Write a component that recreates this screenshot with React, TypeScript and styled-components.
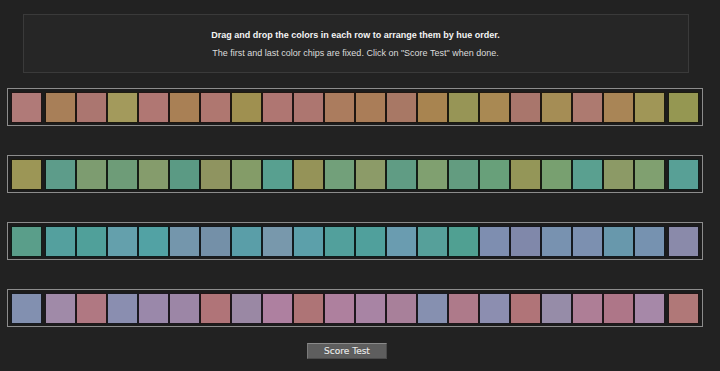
import React from "react";
import styled, { createGlobalStyle } from "styled-components";

const GlobalStyle = createGlobalStyle`
  html, body {
    margin: 0;
    padding: 0;
    background: #222222;
  }
  body {
    font-family: "Liberation Sans", Arial, sans-serif;
  }
`;

const Page = styled.div`
  width: 710px;
  display: flex;
  flex-direction: column;
  align-items: center;
  padding-top: 14px;
`;

const InfoBox = styled.div`
  box-sizing: border-box;
  width: 666px;
  height: 59px;
  margin-left: 1px;
  background: #262626;
  border: 1px solid #3a3a3a;
  display: flex;
  flex-direction: column;
  align-items: center;
  padding-top: 11px;
`;

const Line = styled.div<{ $bold?: boolean }>`
  font-size: 9px;
  line-height: 18px;
  font-weight: ${(p) => (p.$bold ? 700 : 400)};
  color: ${(p) => (p.$bold ? "#f4f4f4" : "#dcdcdc")};
  white-space: nowrap;
`;

const Rows = styled.div`
  display: flex;
  flex-direction: column;
  gap: 29px;
  margin-top: 15px;
`;

const Row = styled.div`
  box-sizing: border-box;
  width: 696px;
  height: 38px;
  border: 1px solid #8c8c8c;
  background: #1c1c1c;
  padding: 3px 3px 2px 3px;
  display: flex;
  gap: 3px;
`;

const Track = styled.div`
  display: flex;
`;

const Chip = styled.div<{ $c: string }>`
  box-sizing: border-box;
  width: 31px;
  height: 31px;
  border: 1px solid rgba(0, 0, 0, 0.82);
  background: ${(p) => p.$c};
`;

const ScoreButton = styled.button`
  box-sizing: border-box;
  width: 80px;
  height: 16px;
  margin-top: 16px;
  margin-right: 16px;
  padding: 0;
  background: #5e5e5e;
  border: 1px solid #4a4a4a;
  border-top-color: #8a8a8a;
  border-left-color: #7a7a7a;
  color: #ececec;
  font-family: "DejaVu Sans", "Liberation Sans", sans-serif;
  font-size: 9px;
  line-height: 14px;
  text-shadow: 0 0 1px rgba(0, 0, 0, 0.6);
  -webkit-text-stroke: 0.2px #ececec;
  cursor: pointer;
`;

const rows: string[][] = [
  [
    "#b07a78",
    "#a87f58", "#ab7670", "#a39a5c", "#b07773", "#a98055", "#af7770", "#9f9050", "#af7672", "#ad7670", "#ab7c5e",
    "#aa7d58", "#a87865", "#a88450", "#979556", "#a98953", "#a9766c", "#a58d55", "#ad7a70", "#a98556", "#a09657",
    "#959752",
  ],
  [
    "#9c9656",
    "#5d9c8a", "#7d9c70", "#6e9c78", "#859c6c", "#5b9a84", "#8f9460", "#849c68", "#58a090", "#959358", "#72a07a",
    "#8c9b68", "#609c84", "#80a070", "#639c80", "#68a07a", "#949658", "#78a070", "#5aa090", "#8c9a66", "#80a070",
    "#58a096",
  ],
  [
    "#5a9e8a",
    "#54a09e", "#50a09a", "#64a0ac", "#52a2a4", "#7496ac", "#7490a8", "#5a9ea8", "#7898ac", "#5ca0aa", "#52a09c",
    "#50a09c", "#6a9cb0", "#56a09a", "#50a092", "#7e8eb0", "#8088aa", "#7892b0", "#7c90b0", "#6898ac", "#7692b0",
    "#8a8aaa",
  ],
  [
    "#8290b0",
    "#a08aa8", "#b07882", "#8a8eb0", "#9a88aa", "#9c86a6", "#b07478", "#9a88a4", "#ae80a0", "#ae7476", "#ae809e",
    "#a884a4", "#a8809a", "#8690b0", "#ae7a8a", "#8c8eb0", "#b07478", "#968ca8", "#ae7e96", "#ae7688", "#a688a8",
    "#b07878",
  ],
];

export default function App() {
  return (
    <>
      <GlobalStyle />
      <Page>
        <InfoBox>
          <Line $bold>Drag and drop the colors in each row to arrange them by hue order.</Line>
          <Line>The first and last color chips are fixed. Click on "Score Test" when done.</Line>
        </InfoBox>
        <Rows>
          {rows.map((r, i) => (
            <Row key={i}>
              <Chip $c={r[0]} />
              <Track>
                {r.slice(1, -1).map((c, j) => (
                  <Chip key={j} $c={c} />
                ))}
              </Track>
              <Chip $c={r[r.length - 1]} />
            </Row>
          ))}
        </Rows>
        <ScoreButton>Score Test</ScoreButton>
      </Page>
    </>
  );
}
